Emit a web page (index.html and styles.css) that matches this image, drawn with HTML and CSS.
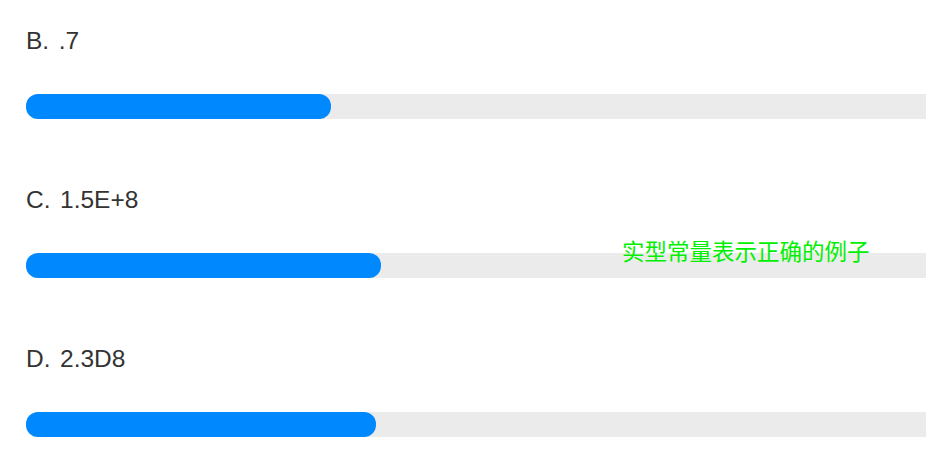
FILE: index.html
```html
<!DOCTYPE html>
<html lang="zh">
<head>
<meta charset="utf-8">
<link rel="stylesheet" href="styles.css">
</head>
<body>
<div class="list">
  <div class="option">
    <div class="label"><span class="key">B.</span><span class="val">.7</span></div>
    <div class="track"><div class="fill" style="width:305px"></div></div>
  </div>
  <div class="option">
    <div class="label"><span class="key">C.</span><span class="val">1.5E+8</span></div>
    <div class="track"><div class="fill" style="width:355px"></div></div>
  </div>
  <div class="option">
    <div class="label"><span class="key">D.</span><span class="val">2.3D8</span></div>
    <div class="track"><div class="fill" style="width:350px"></div></div>
  </div>
</div>
<div class="note">实型常量表示正确的例子</div>
</body>
</html>
```
FILE: styles.css
```css
html, body {
  margin: 0;
  padding: 0;
  background: #ffffff;
  overflow: hidden;
}
body {
  width: 926px;
  height: 466px;
  position: relative;
  font-family: "Liberation Sans", Arial, sans-serif;
}
.list {
  padding: 24px 0 0 26px;
  display: flex;
  flex-direction: column;
  gap: 64.5px;
}
.option {
  display: flex;
  flex-direction: column;
}
.label {
  font-size: 24.5px;
  line-height: 30px;
  padding-top: 2px;
  color: #333333;
  display: flex;
  margin-bottom: 38px;
}
.key {
  margin-right: 9.5px;
}
.track {
  width: 100%;
  height: 24.5px;
  background: #ebebeb;
  border-radius: 12px 0 0 12px;
}
.fill {
  height: 100%;
  background: #0088ff;
  border-radius: 12px;
}
.note {
  position: absolute;
  left: 622px;
  top: 236px;
  font-family: "Noto Sans CJK SC", "Microsoft YaHei", sans-serif;
  font-size: 22.5px;
  line-height: 28px;
  color: #00f000;
  white-space: nowrap;
}
```
